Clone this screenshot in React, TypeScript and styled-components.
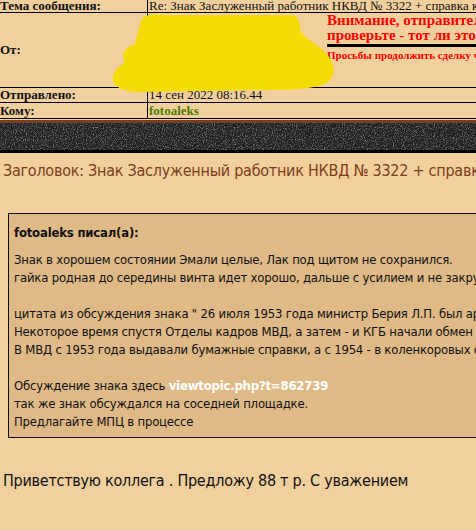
import React from "react";
import styled, { createGlobalStyle } from "styled-components";

const GlobalStyle = createGlobalStyle`
  html, body {
    margin: 0;
    padding: 0;
    background: #f1d09e;
    overflow: hidden;
  }
`;

const serif = `"Liberation Serif", "Times New Roman", serif`;
const sans = `"DejaVu Sans Condensed", "DejaVu Sans", Tahoma, sans-serif`;

export default function App() {
  return (
    <>
      <GlobalStyle />
      <Page>
        <InfoTable>
          <tbody>
            <tr>
              <Label $h={12}>Тема сообщения:</Label>
              <Value>Re: Знак Заслуженный работник НКВД № 3322 + справка к нему</Value>
            </tr>
            <tr>
              <Label $h={74}>От:</Label>
              <FromCell>
                <Redaction viewBox="0 0 230 82" aria-hidden="true">
                  <path
                    d="M32 10 C32 2 45 2 60 3 L180 3 C192 3 190 12 192 20 C200 30 215 35 222 48 C228 60 225 72 205 75 C190 78 170 78 150 78 L30 80 C10 80 2 72 4 64 C6 56 12 54 16 50 C12 44 14 36 26 32 C28 24 30 16 32 10 Z"
                    fill="#f5dc05"
                  />
                </Redaction>
                <Warning>
                  <WarnTitle>Внимание, отправитель</WarnTitle>
                  <WarnTitle>проверьте - тот ли это человек</WarnTitle>
                  <WarnRule />
                  <WarnNote>Просьбы продолжить сделку через личку</WarnNote>
                </Warning>
              </FromCell>
            </tr>
            <tr>
              <Label $h={14}>Отправлено:</Label>
              <Value>14 сен 2022 08:16.44</Value>
            </tr>
            <tr>
              <Label $h={15}>Кому:</Label>
              <Value>
                <UserName>fotoaleks</UserName>
              </Value>
            </tr>
          </tbody>
        </InfoTable>

        <TextureBar>
          <svg width="100%" height="100%" preserveAspectRatio="none" aria-hidden="true">
            <filter id="grain">
              <feTurbulence type="fractalNoise" baseFrequency="0.9" numOctaves="2" seed="4" />
              <feColorMatrix
                type="matrix"
                values="0 0 0 0 0.55  0 0 0 0 0.55  0 0 0 0 0.57  0 0 0 1.6 -0.75"
              />
            </filter>
            <rect width="100%" height="100%" fill="#1f2122" />
            <rect width="100%" height="100%" filter="url(#grain)" />
          </svg>
        </TextureBar>

        <Subject>Заголовок: Знак Заслуженный работник НКВД № 3322 + справка к нему</Subject>

        <Quote>
          <QuoteAuthor>fotoaleks писал(а):</QuoteAuthor>
          <QuoteBody>
            Знак в хорошем состоянии Эмали целые, Лак под щитом не сохранился.
            <br />
            гайка родная до середины винта идет хорошо, дальше с усилием и не закручивается до конца
            <br />
            <br />
            цитата из обсуждения знака " 26 июля 1953 года министр Берия Л.П. был арестован
            <br />
            Некоторое время спустя Отделы кадров МВД, а затем - и КГБ начали обмен удостоверений
            <br />
            В МВД с 1953 года выдавали бумажные справки, а с 1954 - в коленкоровых обложках
            <br />
            <br />
            Обсуждение знака здесь <Link>viewtopic.php?t=862739</Link>
            <br />
            так же знак обсуждался на соседней площадке.
            <br />
            Предлагайте МПЦ в процессе
          </QuoteBody>
        </Quote>

        <Reply>Приветствую коллега . Предложу 88 т р. С уважением</Reply>
      </Page>
    </>
  );
}

const Page = styled.div`
  width: 476px;
  height: 530px;
  overflow: hidden;
  background: #f1d09e;
`;

const InfoTable = styled.table`
  width: 760px;
  margin-left: -2px;
  border-collapse: collapse;
  font-family: ${serif};
  font-size: 13px;
  color: #111;

  td {
    border: 1px solid #000;
    padding: 0 1px;
    vertical-align: middle;
    white-space: nowrap;
    line-height: 12px;
  }

  tr:first-child td {
    border-top: none;
  }
`;

const Label = styled.td<{ $h: number }>`
  width: 146px;
  font-weight: bold;
  height: ${({ $h }) => $h}px;
`;

const Value = styled.td``;

const FromCell = styled.td`
  position: relative;
`;

const Redaction = styled.svg`
  position: absolute;
  z-index: 2;
  left: -39px;
  top: -1px;
  width: 230px;
  height: 82px;
`;

const Warning = styled.div`
  margin-left: 178px;
  color: #f00;
  font-weight: bold;
  height: 74px;
  display: flex;
  flex-direction: column;
`;

const WarnTitle = styled.div`
  font-size: 15px;
  line-height: 15px;
`;

const WarnRule = styled.div`
  height: 3px;
  background: #000;
  margin: 1px 0 2px;
`;

const WarnNote = styled.div`
  font-size: 11px;
  line-height: 13px;
`;

const UserName = styled.span`
  color: #4d7a00;
  font-weight: bold;
`;

const TextureBar = styled.div`
  height: 27px;
  margin-top: 1px;
  border-top: 3px solid #7b3f1c;
  border-bottom: 1px solid #000;
  box-shadow: 0 2px 0 #000;
  margin-bottom: 2px;
  overflow: hidden;

  svg {
    display: block;
  }
`;

const Subject = styled.div`
  margin: 10px 0 0 3px;
  font-family: ${sans};
  font-size: 16px;
  letter-spacing: -0.25px;
  line-height: 20px;
  color: #7d3d1c;
  white-space: nowrap;
`;

const Quote = styled.div`
  margin: 32px 0 0 8px;
  width: 600px;
  background: #dfba86;
  border: 1px solid #111;
  padding: 10px 5px 6px;
  font-family: ${sans};
  font-size: 13px;
  letter-spacing: -0.2px;
  color: #111;
`;

const QuoteAuthor = styled.div`
  font-weight: bold;
  line-height: 18px;
  margin-bottom: 9px;
`;

const QuoteBody = styled.div`
  line-height: 18px;
  white-space: nowrap;
`;

const Link = styled.span`
  color: #fff;
  font-weight: bold;
`;

const Reply = styled.div`
  margin: 33px 0 0 3px;
  font-family: ${sans};
  font-size: 16px;
  letter-spacing: -0.25px;
  line-height: 20px;
  color: #111;
`;
